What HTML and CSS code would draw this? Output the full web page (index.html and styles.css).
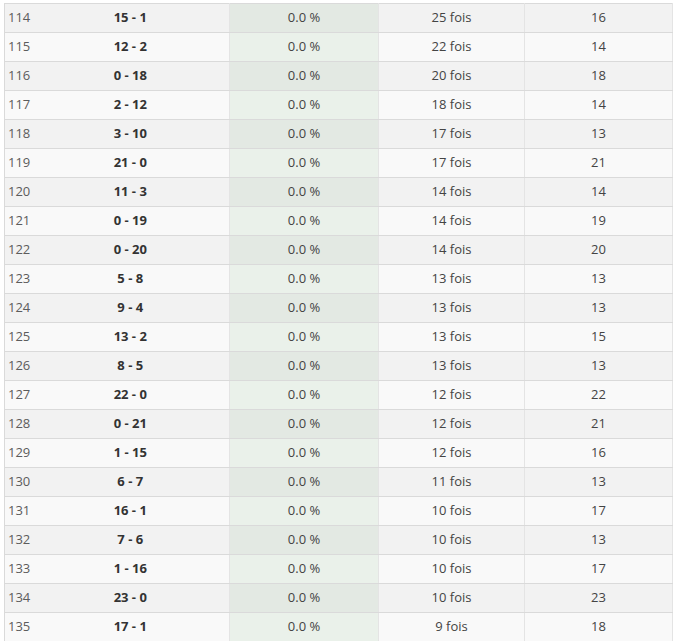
FILE: index.html
```html
<!DOCTYPE html>
<html lang="fr">
<head>
<meta charset="utf-8">
<link rel="stylesheet" href="styles.css">
</head>
<body>
<div class="wrap">
<table class="stats">
<colgroup><col class="c-rank"><col class="c-score"><col class="c-pct"><col class="c-count"><col class="c-total"></colgroup>
<tbody>
<tr><td class="rank">114</td><td class="score">15 - 1</td><td class="pct">0.0 %</td><td>25 fois</td><td>16</td></tr>
<tr><td class="rank">115</td><td class="score">12 - 2</td><td class="pct">0.0 %</td><td>22 fois</td><td>14</td></tr>
<tr><td class="rank">116</td><td class="score">0 - 18</td><td class="pct">0.0 %</td><td>20 fois</td><td>18</td></tr>
<tr><td class="rank">117</td><td class="score">2 - 12</td><td class="pct">0.0 %</td><td>18 fois</td><td>14</td></tr>
<tr><td class="rank">118</td><td class="score">3 - 10</td><td class="pct">0.0 %</td><td>17 fois</td><td>13</td></tr>
<tr><td class="rank">119</td><td class="score">21 - 0</td><td class="pct">0.0 %</td><td>17 fois</td><td>21</td></tr>
<tr><td class="rank">120</td><td class="score">11 - 3</td><td class="pct">0.0 %</td><td>14 fois</td><td>14</td></tr>
<tr><td class="rank">121</td><td class="score">0 - 19</td><td class="pct">0.0 %</td><td>14 fois</td><td>19</td></tr>
<tr><td class="rank">122</td><td class="score">0 - 20</td><td class="pct">0.0 %</td><td>14 fois</td><td>20</td></tr>
<tr><td class="rank">123</td><td class="score">5 - 8</td><td class="pct">0.0 %</td><td>13 fois</td><td>13</td></tr>
<tr><td class="rank">124</td><td class="score">9 - 4</td><td class="pct">0.0 %</td><td>13 fois</td><td>13</td></tr>
<tr><td class="rank">125</td><td class="score">13 - 2</td><td class="pct">0.0 %</td><td>13 fois</td><td>15</td></tr>
<tr><td class="rank">126</td><td class="score">8 - 5</td><td class="pct">0.0 %</td><td>13 fois</td><td>13</td></tr>
<tr><td class="rank">127</td><td class="score">22 - 0</td><td class="pct">0.0 %</td><td>12 fois</td><td>22</td></tr>
<tr><td class="rank">128</td><td class="score">0 - 21</td><td class="pct">0.0 %</td><td>12 fois</td><td>21</td></tr>
<tr><td class="rank">129</td><td class="score">1 - 15</td><td class="pct">0.0 %</td><td>12 fois</td><td>16</td></tr>
<tr><td class="rank">130</td><td class="score">6 - 7</td><td class="pct">0.0 %</td><td>11 fois</td><td>13</td></tr>
<tr><td class="rank">131</td><td class="score">16 - 1</td><td class="pct">0.0 %</td><td>10 fois</td><td>17</td></tr>
<tr><td class="rank">132</td><td class="score">7 - 6</td><td class="pct">0.0 %</td><td>10 fois</td><td>13</td></tr>
<tr><td class="rank">133</td><td class="score">1 - 16</td><td class="pct">0.0 %</td><td>10 fois</td><td>17</td></tr>
<tr><td class="rank">134</td><td class="score">23 - 0</td><td class="pct">0.0 %</td><td>10 fois</td><td>23</td></tr>
<tr><td class="rank">135</td><td class="score">17 - 1</td><td class="pct">0.0 %</td><td>9 fois</td><td>18</td></tr>
</tbody>
</table>
</div>
</body>
</html>
```

FILE: styles.css
```css
html, body {
  margin: 0;
  padding: 0;
  background: #ffffff;
}
.wrap {
  padding: 3px 0 0 4px;
}
.stats {
  border-collapse: collapse;
  table-layout: fixed;
  width: 668px;
  font-family: "Open Sans", "Liberation Sans", sans-serif;
  font-size: 13px;
  color: #444;
  border: 1px solid #dadada;
}
.c-rank { width: 27px; }
.c-score { width: 198px; }
.c-pct { width: 149px; }
.c-count { width: 146px; }
.c-total { width: 148px; }
.stats tr {
  height: 29px;
}
.stats td {
  padding: 0 0 2px 0;
  text-align: center;
  vertical-align: middle;
  border-top: 1px solid #dadada;
  border-bottom: 1px solid #dadada;
  border-left: 1px solid #e4e4e4;
  border-right: 1px solid #e4e4e4;
  white-space: nowrap;
}
.stats td.rank {
  text-align: left;
  padding-left: 3px;
  color: #5c5c5c;
  border-right: none;
  border-left: 1px solid #dadada;
}
.stats td.score {
  font-weight: 700;
  color: #333;
  border-left: none;
}
.stats tr:nth-child(odd) { background: #f2f2f2; }
.stats tr:nth-child(even) { background: #f9f9f9; }
.stats tr:nth-child(odd) td.pct { background: #e3e9e3; }
.stats tr:nth-child(even) td.pct { background: #eaf1ea; }
```
